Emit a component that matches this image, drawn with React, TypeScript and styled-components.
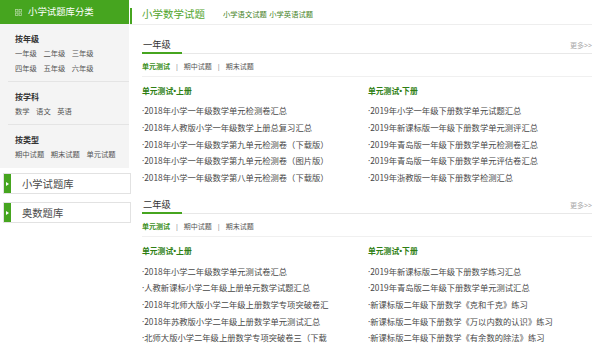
import React from "react";
import styled, { createGlobalStyle } from "styled-components";

const GREEN = "#46a51f";

const Global = createGlobalStyle`
  html, body { margin: 0; padding: 0; background: #fff; }
  body { font-family: "Noto Sans", "Noto Sans CJK SC", sans-serif; color: #444; }
  * { box-sizing: border-box; }
`;

const Page = styled.div`
  display: flex;
  width: 600px;
  height: 353px;
  overflow: hidden;
`;

const Sidebar = styled.aside`
  width: 130px;
  flex-shrink: 0;
  display: flex;
  flex-direction: column;
`;

const SideHeader = styled.div`
  height: 24px;
  width: 129px;
  background: ${GREEN};
  color: #fff;
  display: flex;
  align-items: center;
  padding-left: 15px;
  gap: 6px;
  font-size: 9.4px;
  line-height: 1;
`;

const Panel = styled.div`
  width: 129px;
  background: #f4f4f4;
  padding: 0 0 1px 8px;
`;

const Group = styled.div<{ $last?: boolean }>`
  padding: 7px 0 5px 7px;
  border-bottom: ${(p) => (p.$last ? "none" : "1px solid #e4e4e4")};
`;

const GroupTitle = styled.div`
  font-size: 8px;
  font-weight: bold;
  color: #333;
  line-height: 15px;
`;

const GroupRow = styled.div`
  display: flex;
  gap: 6.5px;
  font-size: 7.3px;
  line-height: 15px;
  color: #555;
`;

const SideBox = styled.div<{ $mt: number }>`
  margin: ${(p) => p.$mt}px 0 0 3px;
  width: 128px;
  height: 21px;
  border: 1px solid #e2e2e2;
  display: flex;
  align-items: stretch;
`;

const BoxMarker = styled.span`
  width: 7px;
  background: ${GREEN};
  display: flex;
  align-items: center;
  justify-content: center;
  &::after {
    content: "";
    border-left: 3px solid #fff;
    border-top: 2.5px solid transparent;
    border-bottom: 2.5px solid transparent;
  }
`;

const BoxText = styled.span`
  padding-left: 11px;
  display: flex;
  align-items: center;
  font-size: 10.3px;
  color: #4a4a4a;
`;

const Main = styled.main`
  width: 462px;
  flex-shrink: 0;
  display: flex;
  flex-direction: column;
`;

const TitleBar = styled.div`
  height: 25px;
  padding-top: 4px;
  border-bottom: 1px solid #eeeeee;
  display: flex;
  align-items: center;
`;

const Mark = styled.span`
  width: 2px;
  height: 16px;
  align-self: flex-end;
  background: ${GREEN};
`;

const Title = styled.span`
  margin-left: 10px;
  font-size: 10.5px;
  color: #52a52e;
  line-height: 1;
`;

const SubLinks = styled.span`
  margin-left: 18px;
  display: flex;
  gap: 2.5px;
  font-size: 7.3px;
  color: #3f7f25;
`;

const Section = styled.section`
  padding: 13px 0 0 12px;
`;

const Head = styled.div`
  display: flex;
  justify-content: space-between;
  align-items: flex-end;
  border-bottom: 1px solid #e8e8e8;
`;

const HeadTab = styled.div`
  width: 40px;
  font-size: 9.3px;
  line-height: 14px;
  padding-left: 1px;
  color: #333;
  border-bottom: 2px solid ${GREEN};
  margin-bottom: -1px;
`;

const More = styled.span`
  font-size: 7px;
  color: #aaa;
  align-self: center;
  margin-bottom: 2px;
`;

const TabsRow = styled.div`
  height: 23px;
  padding-top: 2px;
  display: flex;
  align-items: center;
  border-bottom: 1px solid #f0f0f0;
  font-size: 7px;
  color: #555;
`;

const Tab = styled.span<{ $active?: boolean }>`
  color: ${(p) => (p.$active ? "#3a8f1a" : "#555")};
  font-weight: ${(p) => (p.$active ? "bold" : "normal")};
`;

const Sep = styled.span`
  margin: 0 5px;
  color: #888;
`;

const Cols = styled.div`
  display: grid;
  grid-template-columns: 226px 1fr;
`;

const ColTitle = styled.div`
  padding-top: 8px;
  line-height: 12px;
  font-size: 7.8px;
  font-weight: bold;
  color: #2f7f14;
`;

const List = styled.ul`
  list-style: none;
  margin: 5.4px 0 0;
  padding: 0;
`;

const Item = styled.li`
  width: 189px;
  height: 16.6px;
  overflow: hidden;
  font-family: "Noto Sans CJK SC", sans-serif;
  font-size: 8.3px;
  line-height: 16.6px;
  color: #484848;
`;

const Dot = styled.span`
  font-family: "Noto Sans", sans-serif;
`;

const GridIcon = () => (
  <svg width="7" height="7" viewBox="0 0 7 7">
    <g fill="none" stroke="rgba(255,255,255,0.55)" strokeWidth="0.8">
      <rect x="0.5" y="0.5" width="2.4" height="2.4" />
      <rect x="4.1" y="0.5" width="2.4" height="2.4" />
      <rect x="0.5" y="4.1" width="2.4" height="2.4" />
      <rect x="4.1" y="4.1" width="2.4" height="2.4" />
    </g>
  </svg>
);

const groups = [
  { title: "按年级", rows: [["一年级", "二年级", "三年级"], ["四年级", "五年级", "六年级"]] },
  { title: "按学科", rows: [["数学", "语文", "英语"]] },
  { title: "按类型", rows: [["期中试题", "期末试题", "单元试题"]] },
];

const sections = [
  {
    name: "一年级",
    left: [
      "2018年小学一年级数学单元检测卷汇总",
      "2018年人教版小学一年级数学上册总复习汇总",
      "2018年小学一年级数学第九单元检测卷（下载版）",
      "2018年小学一年级数学第九单元检测卷（图片版）",
      "2018年小学一年级数学第八单元检测卷（下载版）",
    ],
    right: [
      "2019年小学一年级下册数学单元试题汇总",
      "2019年新课标版一年级下册数学单元测评汇总",
      "2019年青岛版一年级下册数学单元检测卷汇总",
      "2019年青岛版一年级下册数学单元评估卷汇总",
      "2019年浙教版一年级下册数学检测汇总",
    ],
  },
  {
    name: "二年级",
    left: [
      "2018年小学二年级数学单元测试卷汇总",
      "人教新课标小学二年级上册单元数学试题汇总",
      "2018年北师大版小学二年级上册数学专项突破卷汇总",
      "2018年苏教版小学二年级上册数学单元测试汇总",
      "北师大版小学二年级上册数学专项突破卷三（下载版）",
    ],
    right: [
      "2019年新课标版二年级下册数学练习汇总",
      "2019年青岛版二年级下册数学单元测试汇总",
      "新课标版二年级下册数学《克和千克》练习",
      "新课标版二年级下册数学《万以内数的认识》练习",
      "新课标版二年级下册数学《有余数的除法》练习",
    ],
  },
];

export default function App() {
  return (
    <>
      <Global />
      <Page>
        <Sidebar>
          <SideHeader>
            <GridIcon />
            <span>小学试题库分类</span>
          </SideHeader>
          <Panel>
            {groups.map((g, i) => (
              <Group key={g.title} $last={i === groups.length - 1}>
                <GroupTitle>{g.title}</GroupTitle>
                {g.rows.map((r, j) => (
                  <GroupRow key={j}>
                    {r.map((t) => (
                      <span key={t}>{t}</span>
                    ))}
                  </GroupRow>
                ))}
              </Group>
            ))}
          </Panel>
          <SideBox $mt={5}>
            <BoxMarker />
            <BoxText>小学试题库</BoxText>
          </SideBox>
          <SideBox $mt={8}>
            <BoxMarker />
            <BoxText>奥数题库</BoxText>
          </SideBox>
        </Sidebar>
        <Main>
          <TitleBar>
            <Mark />
            <Title>小学数学试题</Title>
            <SubLinks>
              <span>小学语文试题</span>
              <span>小学英语试题</span>
            </SubLinks>
          </TitleBar>
          {sections.map((s) => (
            <Section key={s.name}>
              <Head>
                <HeadTab>{s.name}</HeadTab>
                <More>更多&gt;&gt;</More>
              </Head>
              <TabsRow>
                <Tab $active>单元测试</Tab>
                <Sep>|</Sep>
                <Tab>期中试题</Tab>
                <Sep>|</Sep>
                <Tab>期末试题</Tab>
              </TabsRow>
              <Cols>
                <div>
                  <ColTitle>单元测试•上册</ColTitle>
                  <List>
                    {s.left.map((t) => (
                      <Item key={t}>
                        <Dot>·</Dot>
                        {t}
                      </Item>
                    ))}
                  </List>
                </div>
                <div>
                  <ColTitle>单元测试•下册</ColTitle>
                  <List>
                    {s.right.map((t) => (
                      <Item key={t}>
                        <Dot>·</Dot>
                        {t}
                      </Item>
                    ))}
                  </List>
                </div>
              </Cols>
            </Section>
          ))}
        </Main>
      </Page>
    </>
  );
}
